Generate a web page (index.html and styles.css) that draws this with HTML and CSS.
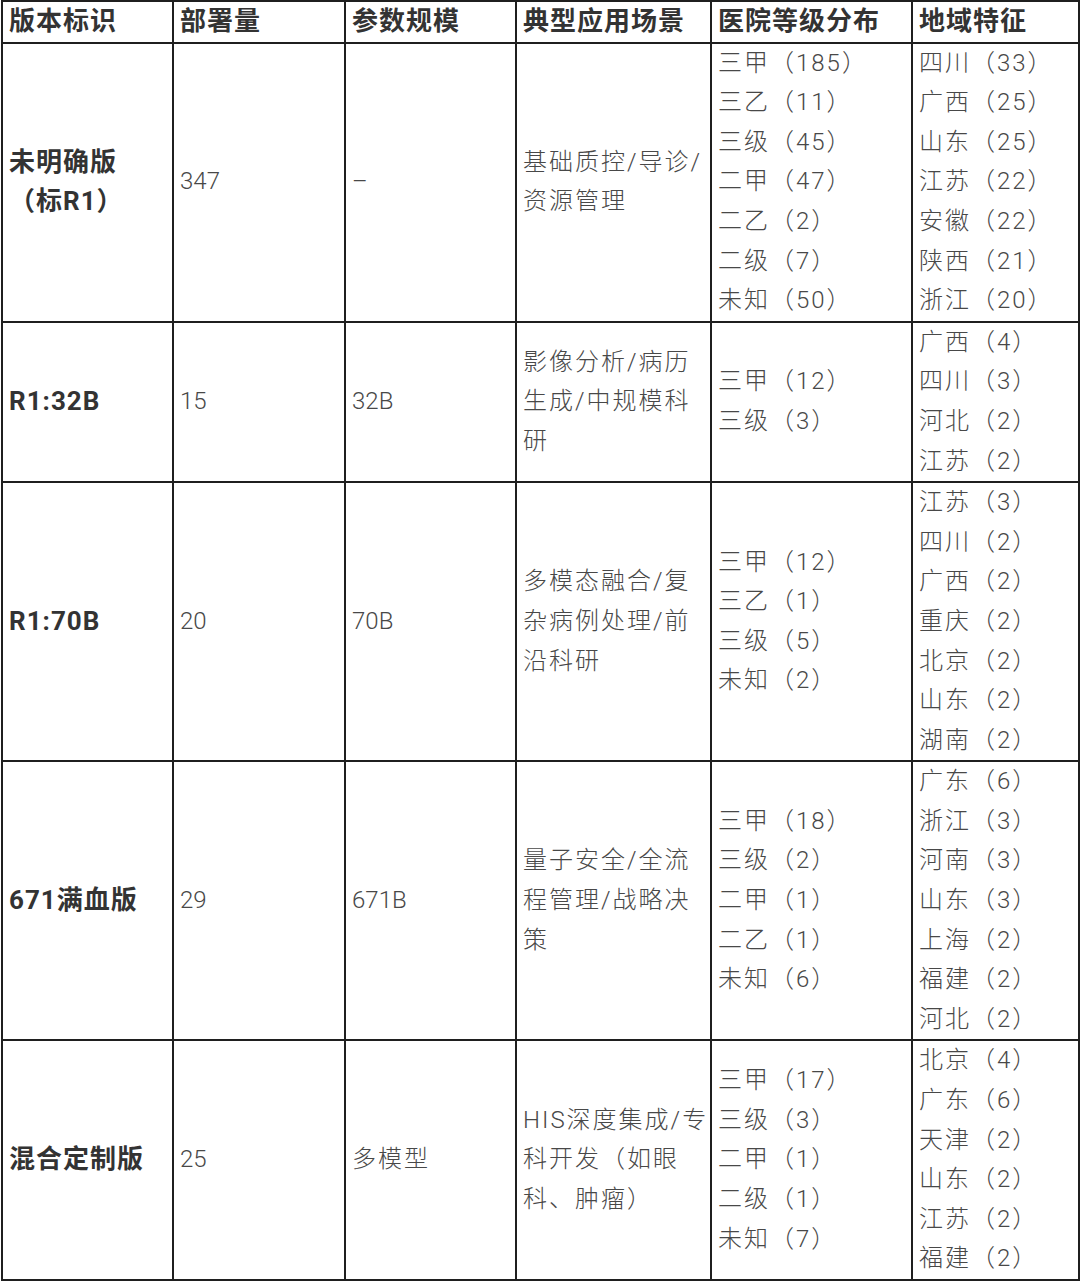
FILE: index.html
```html
<!DOCTYPE html>
<html lang="zh-CN">
<head>
<meta charset="utf-8">
<title>版本部署统计</title>
<link rel="stylesheet" href="styles.css">
</head>
<body>
<table class="stats">
  <colgroup>
    <col class="c-ver">
    <col class="c-num">
    <col class="c-param">
    <col class="c-scene">
    <col class="c-level">
    <col class="c-region">
  </colgroup>
  <thead>
    <tr>
      <th>版本标识</th>
      <th>部署量</th>
      <th>参数规模</th>
      <th>典型应用场景</th>
      <th>医院等级分布</th>
      <th>地域特征</th>
    </tr>
  </thead>
  <tbody>
    <tr>
      <td class="ver">未明确版<br>（标R1）</td>
      <td class="num">347</td>
      <td class="num">–</td>
      <td>基础质控/导诊/<br>资源管理</td>
      <td>三甲（185）<br>三乙（11）<br>三级（45）<br>二甲（47）<br>二乙（2）<br>二级（7）<br>未知（50）</td>
      <td>四川（33）<br>广西（25）<br>山东（25）<br>江苏（22）<br>安徽（22）<br>陕西（21）<br>浙江（20）</td>
    </tr>
    <tr>
      <td class="ver">R1:32B</td>
      <td class="num">15</td>
      <td class="num">32B</td>
      <td>影像分析/病历<br>生成/中规模科<br>研</td>
      <td>三甲（12）<br>三级（3）</td>
      <td>广西（4）<br>四川（3）<br>河北（2）<br>江苏（2）</td>
    </tr>
    <tr>
      <td class="ver">R1:70B</td>
      <td class="num">20</td>
      <td class="num">70B</td>
      <td>多模态融合/复<br>杂病例处理/前<br>沿科研</td>
      <td>三甲（12）<br>三乙（1）<br>三级（5）<br>未知（2）</td>
      <td>江苏（3）<br>四川（2）<br>广西（2）<br>重庆（2）<br>北京（2）<br>山东（2）<br>湖南（2）</td>
    </tr>
    <tr>
      <td class="ver">671满血版</td>
      <td class="num">29</td>
      <td class="num">671B</td>
      <td>量子安全/全流<br>程管理/战略决<br>策</td>
      <td>三甲（18）<br>三级（2）<br>二甲（1）<br>二乙（1）<br>未知（6）</td>
      <td>广东（6）<br>浙江（3）<br>河南（3）<br>山东（3）<br>上海（2）<br>福建（2）<br>河北（2）</td>
    </tr>
    <tr>
      <td class="ver">混合定制版</td>
      <td class="num">25</td>
      <td>多模型</td>
      <td>HIS深度集成/专<br>科开发（如眼<br>科、肿瘤）</td>
      <td>三甲（17）<br>三级（3）<br>二甲（1）<br>二级（1）<br>未知（7）</td>
      <td>北京（4）<br>广东（6）<br>天津（2）<br>山东（2）<br>江苏（2）<br>福建（2）</td>
    </tr>
  </tbody>
</table>
</body>
</html>
```

FILE: styles.css
```css
html, body {
  margin: 0;
  padding: 0;
  background: #ffffff;
}

body {
  padding-left: 1px;
}

.stats {
  width: 1077px;
  table-layout: fixed;
  border-collapse: collapse;
  border: 2px solid #1f1f1f;
  font-family: Roboto, "Noto Sans CJK SC", sans-serif;
  color: #484848;
}

.c-ver { width: 171px; }
.c-num { width: 172px; }
.c-param { width: 171px; }
.c-scene { width: 195px; }
.c-level { width: 201px; }
.c-region { width: 167px; }

.stats th,
.stats td {
  border: 2px solid #1f1f1f;
  padding: 0 4px 0 6px;
  text-align: left;
  vertical-align: middle;
  white-space: nowrap;
  overflow: hidden;
  line-height: 39.6px;
}

.stats th {
  font-size: 26px;
  font-weight: 700;
  letter-spacing: 1px;
  color: #333333;
}

.stats td {
  font-size: 24px;
  font-weight: 300;
  letter-spacing: 2px;
}

.stats td.num {
  letter-spacing: 0;
}

.stats td.ver {
  font-size: 26px;
  font-weight: 700;
  letter-spacing: 1px;
  color: #333333;
}
```
